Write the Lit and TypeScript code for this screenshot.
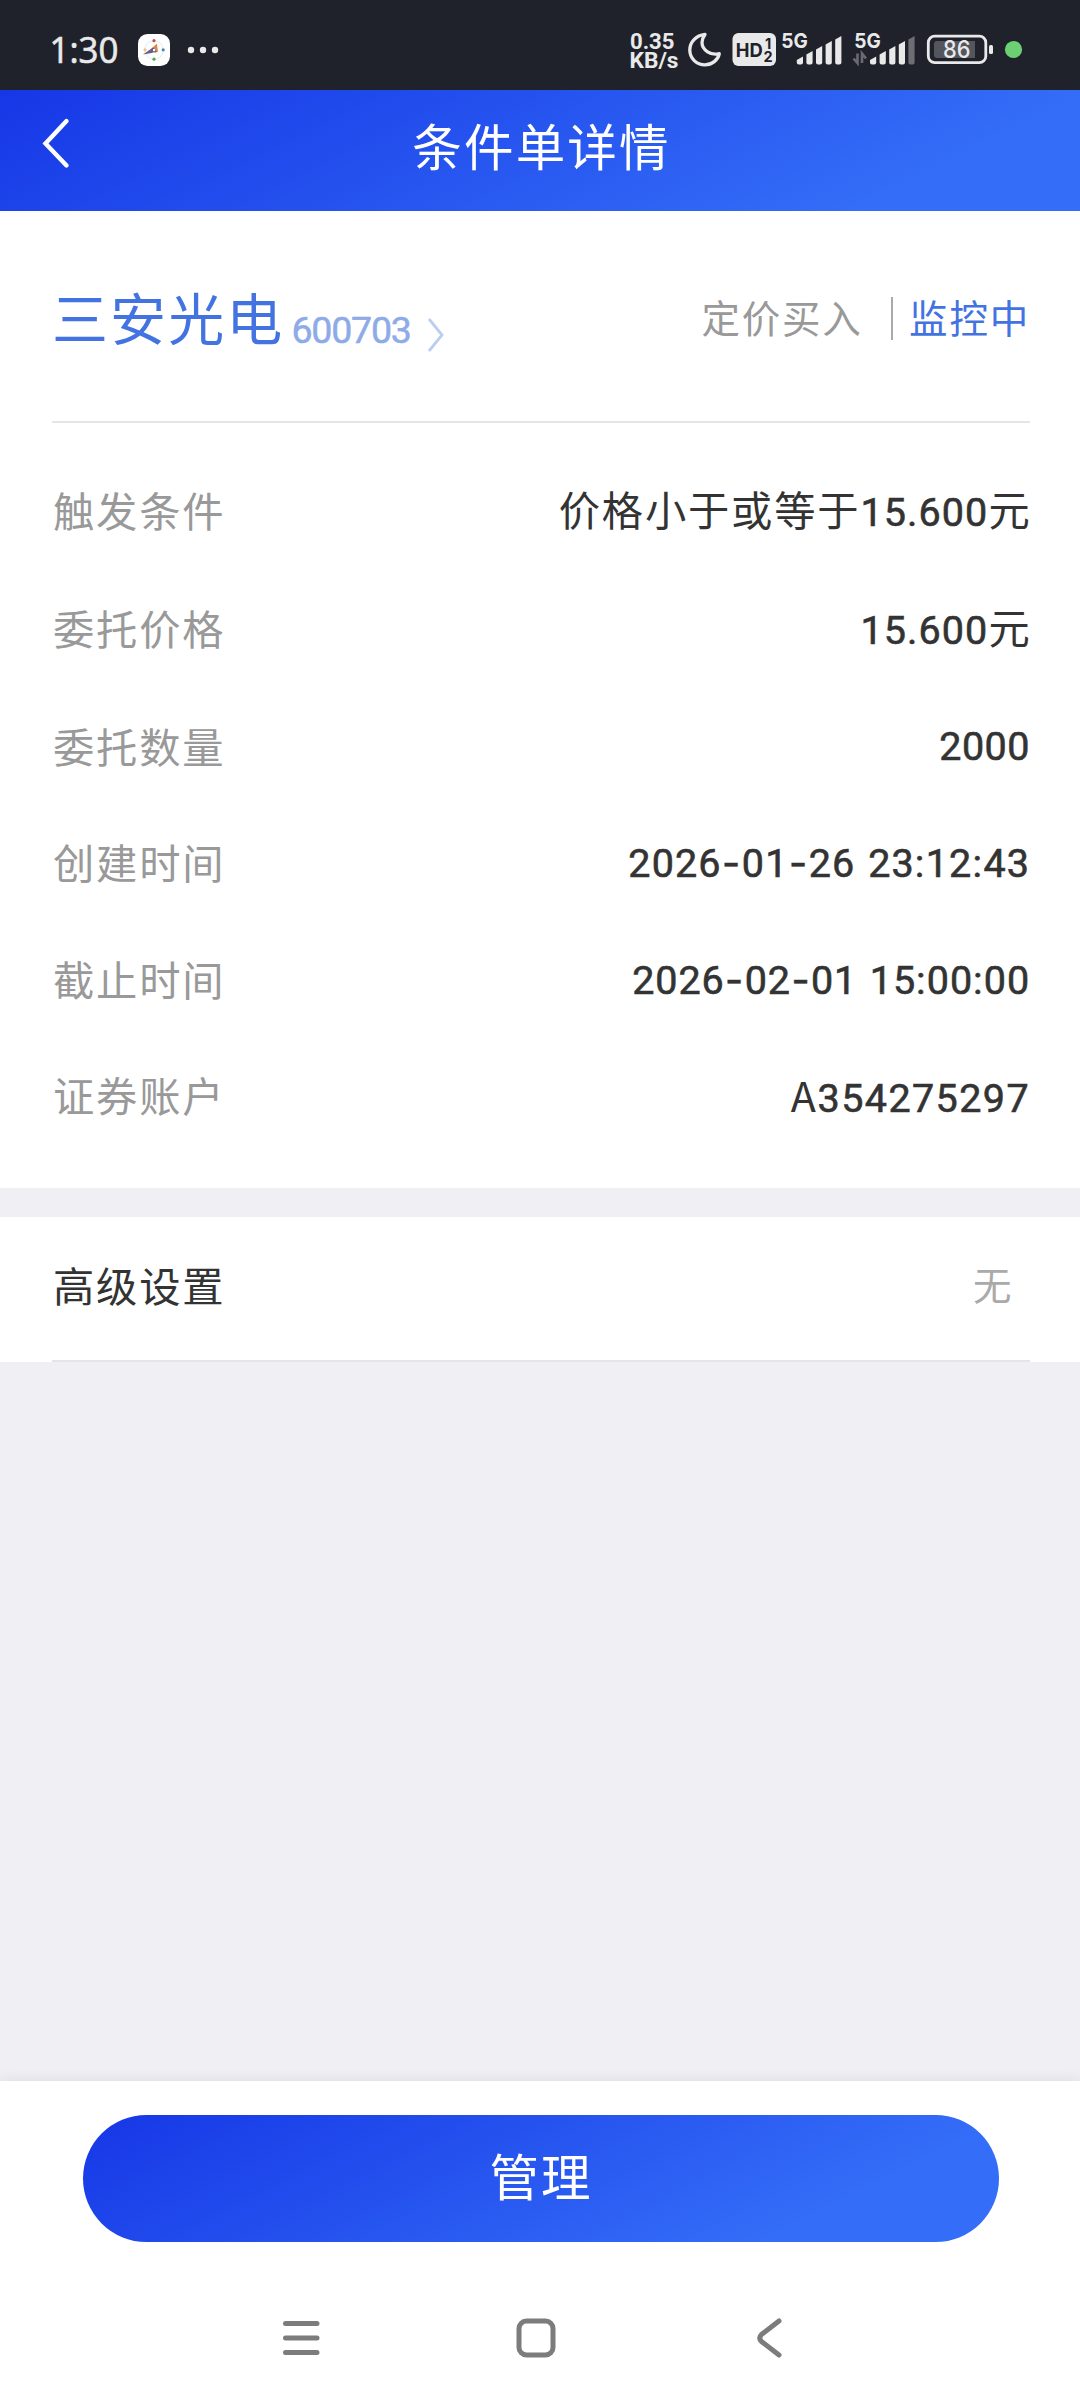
import { LitElement, html, css, svg } from "lit";
import { customElement, property } from "lit/decorators.js";

interface Row {
  label: string;
  prefix?: string;
  value: string;
  suffix?: string;
  tracking: number;
}

const ROWS: Row[] = [
  { label: "触发条件", prefix: "价格小于或等于", value: "15.600", suffix: "元", tracking: 1.1 },
  { label: "委托价格", value: "15.600", suffix: "元", tracking: 1.1 },
  { label: "委托数量", value: "2000", tracking: 0.5 },
  { label: "创建时间", value: "2026-01-26 23:12:43", tracking: 1.1 },
  { label: "截止时间", value: "2026-02-01 15:00:00", tracking: 0.9 },
  { label: "证券账户", prefix: "A", value: "354275297", tracking: 1.4 },
];

@customElement("status-bar")
class StatusBar extends LitElement {
  static styles = css`
    :host { display: block; height: 90px; background: #1f222a; }
    .bar { display: block; }
    text { fill: #e9e9ea; }
    .clock { font-family: "Open Sans", sans-serif; font-size: 37px; font-weight: 500; stroke: #e9e9ea; stroke-width: .7px; }
    .rate { font-family: Roboto, sans-serif; font-size: 21.5px; font-weight: 700; }
    .net { font-family: Inter, sans-serif; font-size: 20.5px; font-weight: 700; }
    .hd { font-family: Inter, sans-serif; font-size: 19px; font-weight: 700; fill: #1f222a; }
    .hdn { font-family: Inter, sans-serif; font-size: 14.5px; font-weight: 700; fill: #1f222a; }
    .level { font-family: Inter, sans-serif; font-size: 24px; font-weight: 500; }
  `;

  private signal(x: number, lastFill: string) {
    const heights = [8, 13.5, 18.5, 23.5, 28.4];
    return heights.map((h, i) => {
      const l = x + i * 9.6;
      const fill = i === 4 ? lastFill : "#e9e9ea";
      return svg`<path d="M${l} ${64.4 - h + 3.5}L${l + 6.2} ${64.4 - h}V62.4q0 2-2 2H${l + 2}q-2 0-2-2Z" fill=${fill}></path>`;
    });
  }

  render() {
    return html`<svg class="bar" width="1080" height="90" viewBox="0 0 1080 90">
      <text class="clock" x="49.500" y="63" textLength="69" lengthAdjust="spacingAndGlyphs">1:30</text>
      <rect x="138" y="34" width="32" height="32" rx="9.500" fill="#fff"></rect>
      <circle cx="154" cy="50" r="9.300" fill="none" stroke="#dfe3e3" stroke-width=".8"></circle>
      <circle cx="154" cy="40.700" r="1.600" fill="#c0504d"></circle>
      <circle cx="163.200" cy="49.800" r="1.600" fill="#3f86c6"></circle>
      <circle cx="154" cy="59.200" r="1.600" fill="#4ba765"></circle>
      <circle cx="145" cy="49.800" r="1.600" fill="#e8c58a"></circle>
      <path d="M150.500 49.500L156.800 43.500L158 51.500L155 53Z" fill="#d98a45"></path>
      <path d="M143 54.500L153 47.500L157 51.500L151.500 53Z" fill="#6a5a8e"></path>
      <rect x="153" y="49" width="2.200" height="2.200" fill="#fff"></rect>
      <circle cx="191" cy="50" r="3.200" fill="#e9e9ea"></circle>
      <circle cx="203" cy="50" r="3.200" fill="#e9e9ea"></circle>
      <circle cx="215" cy="50" r="3.200" fill="#e9e9ea"></circle>

      <text class="rate" x="630" y="49.200" textLength="44.500" lengthAdjust="spacingAndGlyphs">0.35</text>
      <text class="rate" x="629.500" y="67.600" textLength="49" lengthAdjust="spacingAndGlyphs">KB/s</text>
      <path d="M705 34.400C696 35.500 689.800 42 689.800 50C689.800 58.500 696.500 64.800 705 64.800C712 64.800 718 60 719.300 53.600C711 56 702 50 702 42.500C702 39.500 703.200 36.800 705 34.400Z" fill="none" stroke="#e9e9ea" stroke-width="3.300" stroke-linejoin="round"></path>
      <rect x="732.500" y="33" width="43.500" height="33" rx="6" fill="#e9e9ea"></rect>
      <text class="hd" x="735.800" y="56.600" textLength="27" lengthAdjust="spacingAndGlyphs">HD</text>
      <text class="hdn" x="765" y="48.500">1</text>
      <text class="hdn" x="763.500" y="61.700">2</text>
      <text class="net" x="781.300" y="48.400" textLength="26.500" lengthAdjust="spacingAndGlyphs">5G</text>
      ${this.signal(796.8, "#e9e9ea")}
      <text class="net" x="854.300" y="48.400" textLength="26.500" lengthAdjust="spacingAndGlyphs">5G</text>
      <path d="M857.500 53.500V63L853.500 58.500M862 63V53.500L866 58.500" fill="none" stroke="#696b71" stroke-width="2.600"></path>
      ${this.signal(870, "#6c6e74")}
      <rect x="928.300" y="36.200" width="57.500" height="26.500" rx="6.500" fill="none" stroke="#e9e9ea" stroke-width="2.800"></rect>
      <path d="M937 41H975V58H937q-3 0-3-3V44q0-3 3-3Z" fill="#54565d"></path>
      <rect x="989" y="45" width="4" height="9" rx="1.500" fill="#e9e9ea"></rect>
      <text class="level" x="943" y="58.300" textLength="27.500" lengthAdjust="spacingAndGlyphs">86</text>
      <circle cx="1013.500" cy="49.500" r="8.600" fill="#6bd073"></circle>
    </svg>`;
  }
}

@customElement("detail-row")
class DetailRow extends LitElement {
  @property({ attribute: false }) row!: Row;
  static styles = css`
    .row { display: flex; justify-content: space-between; align-items: center; height: 116.5px; }
    .priced { height: 118.5px; }
    .label { color: #999; font-size: 41.3px; letter-spacing: 1.8px; line-height: 60px; padding: 0 0 9px 1px; }
    .value { color: #333; font-size: 41.3px; letter-spacing: 1.8px; line-height: 60px; display: flex; align-items: baseline; padding-bottom: 5px; }
    .priced .value { margin-right: -1.5px; padding-bottom: 6px; }
    .num { font-family: Roboto, sans-serif; font-size: 39.5px; -webkit-text-stroke: .6px #333; white-space: pre; padding-top: 1px; }
    .dash { font-family: Inter, sans-serif; padding: 0 .5px; }
    .colon { padding: 0 .3px 0 0; }
    .gap { padding-right: 2px; }
  `;
  render() {
    const { label, prefix, value, suffix, tracking } = this.row;
    const kinds: Record<string, string> = { "-": "dash", ":": "colon", " ": "gap" };
    const parts = value.split(/([-: ])/).map((p) => (kinds[p] ? html`<span class=${kinds[p]}>${p}</span>` : p));
    return html`<div class="row ${suffix ? "priced" : ""}"><span class="label">${label}</span>
      <span class="value"><span>${prefix ?? ""}</span><span class="num" style="letter-spacing:${tracking}px">${parts}</span><span>${suffix ?? ""}</span></span></div>`;
  }
}

@customElement("app-root")
class AppRoot extends LitElement {
  static styles = css`
    :host { display: flex; flex-direction: column; width: 1080px; height: 2400px; background: #efeff4; font-family: "Noto Sans CJK SC", sans-serif; overflow: hidden; }
    .header { height: 121px; flex: none; display: grid; grid-template-columns: 120px 1fr 120px; align-items: center; background: linear-gradient(153deg, #1637e6, #346df7 83%); }
    .title { color: #fff; font-size: 49.5px; letter-spacing: 2.2px; line-height: 72px; text-align: center; padding: 0 0 11px 3px; }
    .panel { background: #fff; padding: 0 50px 0 52px; }
    .stock { height: 212px; box-sizing: border-box; display: flex; justify-content: space-between; border-bottom: 2px solid #e5e5e5; }
    .name { display: flex; align-items: baseline; height: 80px; margin-top: 65px; color: #4373e0; font-size: 56px; letter-spacing: 2.1px; line-height: 80px; }
    .code { font-family: Roboto, sans-serif; font-size: 37.5px; color: #8eabe8; -webkit-text-stroke: .5px #8eabe8; padding-top: 4px; margin-left: 7px; letter-spacing: -1.2px; position: relative; top: 3px; }
    .go { margin-left: 16px; align-self: flex-start; margin-top: 41px; }
    .state { display: flex; align-items: center; height: 60px; margin-top: 75px; font-size: 38.5px; letter-spacing: 1.8px; color: #999; }
    .rule { width: 2px; height: 43px; background: #aaa; margin: 4px 16px 0 28.5px; }
    .live { color: #4373e0; }
    .rows { padding: 31px 0 31px; }
    .advanced { margin-top: 29px; background: #fff; height: 145px; padding: 0 50px 0 52px; }
    .line { height: 145px; box-sizing: border-box; border-bottom: 2px solid #e5e5e5; display: flex; justify-content: space-between; align-items: center; }
    .key { color: #333; font-size: 41.3px; letter-spacing: 1.8px; padding: 0 0 9px 1px; }
    .none { color: #aaa; font-size: 38.5px; padding-right: 18.5px; padding-bottom: 12px; }
    .space { flex: 1; }
    .footer { flex: none; height: 319px; background: #fff; box-shadow: 0 -2px 12px rgba(0, 0, 0, .07); display: flex; flex-direction: column; align-items: center; }
    .button { margin: 34px 0 0 2px; width: 916px; height: 127px; flex: none; border: 0; padding: 0 0 9px; border-radius: 64px; color: #fff; font: 49.5px "Noto Sans CJK SC", sans-serif; letter-spacing: 2px; background: linear-gradient(153deg, #1637e6, #346df7 80%); }
    .nav { display: block; margin-top: 56px; }
  `;
  render() {
    return html`
      <status-bar></status-bar>
      <div class="header">
        <svg width="120" height="121" viewBox="0 90 120 121"><path d="M66.500 121L45.500 143.500L66.500 165.500" fill="none" stroke="#fff" stroke-width="4.400" stroke-linecap="round"></path></svg>
        <div class="title">条件单详情</div>
      </div>
      <div class="panel">
        <div class="stock">
          <div class="name">三安光电<span class="code">600703</span>
            <svg class="go" width="18" height="36" viewBox="0 0 18 36"><path d="M2 2L15 18L2 34" fill="none" stroke="#bccdf2" stroke-width="2.800"></path></svg>
          </div>
          <div class="state"><span>定价买入</span><span class="rule"></span><span class="live">监控中</span></div>
        </div>
        <div class="rows">${ROWS.map((r) => html`<detail-row .row=${r}></detail-row>`)}</div>
      </div>
      <div class="advanced"><div class="line"><span class="key">高级设置</span><span class="none">无</span></div></div>
      <div class="space"></div>
      <div class="footer">
        <button class="button">管理</button>
        <svg class="nav" width="1080" height="80" viewBox="0 2298 1080 80" fill="none" stroke="#7c7c7c" stroke-width="5" stroke-linecap="round">
          <path d="M285.500 2323.500H317M285.500 2338H317M285.500 2352.500H317"></path>
          <rect x="519" y="2321" width="34" height="34" rx="7.500"></rect>
          <path d="M779 2321L761.500 2334.500Q758 2338 761.500 2341.500L779 2355"></path>
        </svg>
      </div>`;
  }
}
